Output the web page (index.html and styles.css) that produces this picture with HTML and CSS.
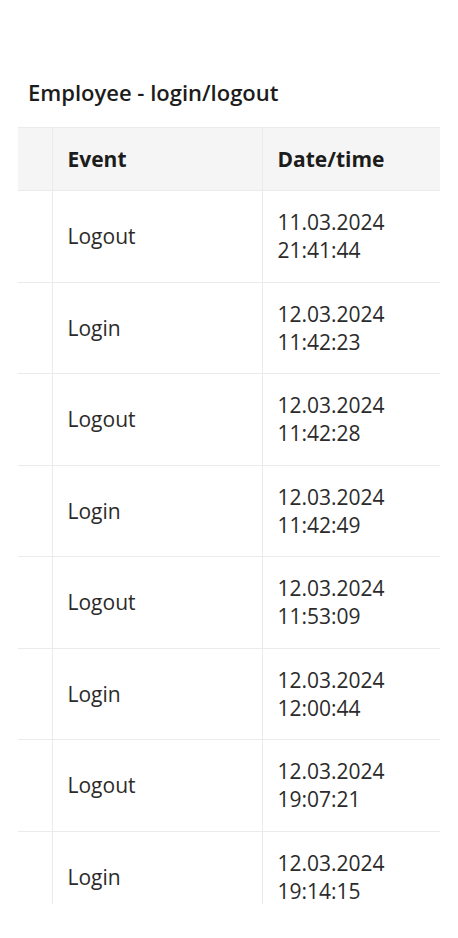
FILE: index.html
```html
<!DOCTYPE html>
<html lang="en">
    <head>
        <meta charset="UTF-8" />
        <meta name="viewport" content="width=device-width, initial-scale=1.0" />
        <title>Employee - login/logout</title>
        <link rel="stylesheet" href="styles.css">
    </head>
    <body>
        <div class="page">
            <h2 class="title">Employee - login/logout</h2>

            <!-- Event log table, scrolled sideways -->
            <div class="table-wrap">
                <table class="log-table">
                    <thead>
                        <tr>
                            <th class="col-select"></th>
                            <th class="col-event">Event</th>
                            <th class="col-date">Date/time</th>
                        </tr>
                    </thead>
                    <tbody>
                        <tr>
                            <td></td>
                            <td>Logout</td>
                            <td>11.03.2024<br>21:41:44</td>
                        </tr>
                        <tr>
                            <td></td>
                            <td>Login</td>
                            <td>12.03.2024<br>11:42:23</td>
                        </tr>
                        <tr>
                            <td></td>
                            <td>Logout</td>
                            <td>12.03.2024<br>11:42:28</td>
                        </tr>
                        <tr>
                            <td></td>
                            <td>Login</td>
                            <td>12.03.2024<br>11:42:49</td>
                        </tr>
                        <tr>
                            <td></td>
                            <td>Logout</td>
                            <td>12.03.2024<br>11:53:09</td>
                        </tr>
                        <tr>
                            <td></td>
                            <td>Login</td>
                            <td>12.03.2024<br>12:00:44</td>
                        </tr>
                        <tr>
                            <td></td>
                            <td>Logout</td>
                            <td>12.03.2024<br>19:07:21</td>
                        </tr>
                        <tr>
                            <td></td>
                            <td>Login</td>
                            <td>12.03.2024<br>19:14:15</td>
                        </tr>
                    </tbody>
                </table>
            </div>
        </div>
    </body>
</html>
```

FILE: styles.css
```css
body {
    font-family: "Open Sans", Arial, sans-serif;
    margin: 0;
    background-color: #fff;
    color: #2b2b2b;
}
.page {
    padding: 78px 0 0 18px;
}
.title {
    font-size: 22px;
    line-height: 28px;
    font-weight: 600;
    color: #1c1c1c;
    margin: 0 0 21px 10px;
}
.table-wrap {
    width: 422px;
    height: 777px;
    overflow: hidden;
}
.log-table {
    border-collapse: collapse;
    width: 600px;
    table-layout: fixed;
    font-size: 21px;
    line-height: 28px;
}
.log-table th {
    background-color: #f5f5f5;
    border-top: 1px solid #ebebeb;
    border-bottom: 1px solid #ebebeb;
    text-align: left;
    font-weight: 700;
    color: #1c1c1c;
    height: 63px;
    padding: 0 15px;
    box-sizing: border-box;
}
.log-table td {
    border-bottom: 1px solid #ebebeb;
    height: 91.5px;
    padding: 0 15px;
    box-sizing: border-box;
    vertical-align: middle;
}
.log-table th + th,
.log-table td + td {
    border-left: 1px solid #ebebeb;
}
.col-select {
    width: 34px;
}
.col-event {
    width: 210px;
}
```
